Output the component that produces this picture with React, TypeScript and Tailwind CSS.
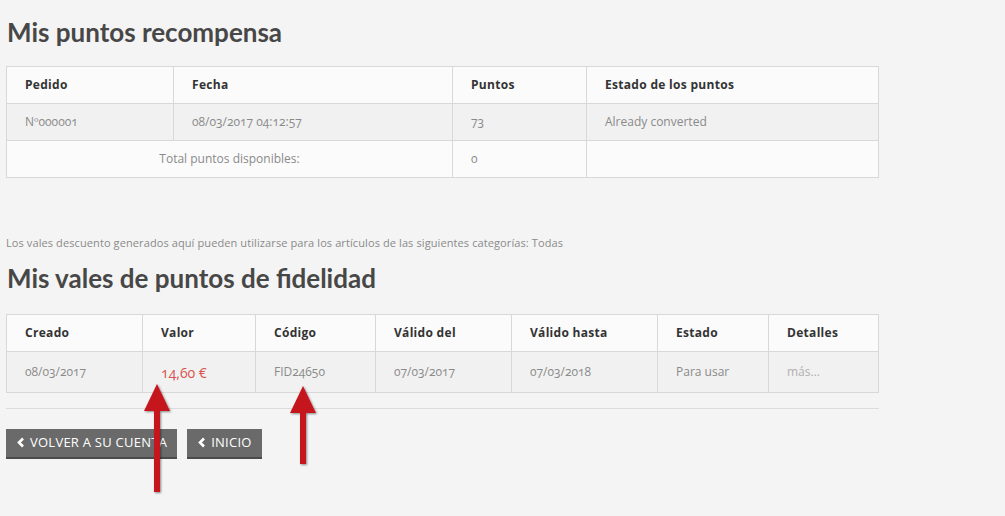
import React from 'react';

const body = {fontFamily: '"Open Sans", "Noto Sans", sans-serif'};

const Chevron = () => (
    <svg width="9" height="11" viewBox="0 0 9 11" className="mr-[5px]">
        <path d="M7 1.5 L3 5.5 L7 9.5" stroke="white" strokeWidth="2.6" fill="none"/>
    </svg>
);

const Arrow = ({x, top, length}: { x: number; top: number; length: number }) => (
    <svg
        className="absolute pointer-events-none"
        style={{left: x - 16, top: top - 2}}
        width="32"
        height={length + 6}
        viewBox={`0 0 32 ${length + 6}`}
    >
        <defs>
            <filter id={`s${x}`} x="-50%" y="-10%" width="200%" height="130%">
                <feDropShadow dx="1" dy="1" stdDeviation="1.2" floodColor="#000" floodOpacity="0.45"/>
            </filter>
        </defs>
        <g filter={`url(#s${x})`} fill="#c4161c">
            <polygon points={`16,2 29,29 3,29`}/>
            <rect x="13" y="27" width="6" height={length - 25}/>
        </g>
    </svg>
);

const th = 'text-left font-bold text-[12px] text-[#333] px-[18px] h-[37px] border border-[#d8d8d8] tracking-[0.3px]';
const td = 'text-[12px] text-[#8a8a8a] px-[18px] border border-[#d8d8d8]';

export default function App() {
    return (
        <div className="relative w-full min-h-[516px] bg-[#f4f4f4] px-[6px] pt-[14px]" style={body}>
            <h1 className="text-[26px] font-bold text-[#474747] leading-[36px] pl-[1px]"
                style={{fontFamily: 'Lato, sans-serif'}}>
                Mis puntos recompensa
            </h1>

            <table className="mt-[16px] w-[873px] border-collapse [font-variant-numeric:oldstyle-nums]">
                <colgroup>
                    <col className="w-[167px]"/>
                    <col className="w-[279px]"/>
                    <col className="w-[134px]"/>
                    <col/>
                </colgroup>
                <thead>
                <tr className="bg-[#fbfbfb]">
                    <th className={th}>Pedido</th>
                    <th className={th}>Fecha</th>
                    <th className={th}>Puntos</th>
                    <th className={th}>Estado de los puntos</th>
                </tr>
                </thead>
                <tbody>
                <tr className="bg-[#f1f1f1] h-[37px]">
                    <td className={td}>Nº000001</td>
                    <td className={td}>08/03/2017 04:12:57</td>
                    <td className={td}>73</td>
                    <td className={td}>Already converted</td>
                </tr>
                <tr className="bg-[#fbfbfb] h-[37px]">
                    <td colSpan={2} className={td + ' text-center'}>Total puntos disponibles:</td>
                    <td className={td}>0</td>
                    <td className={td}></td>
                </tr>
                </tbody>
            </table>

            <p className="mt-[57px] text-[11px] tracking-[0.1px] text-[#8a8a8a]">
                Los vales descuento generados aquí pueden utilizarse para los artículos de las siguientes categorías: Todas
            </p>

            <h2 className="mt-[8px] text-[26px] font-bold text-[#474747] leading-[36px] pl-[1px]"
                style={{fontFamily: 'Lato, sans-serif'}}>
                Mis vales de puntos de fidelidad
            </h2>

            <table className="mt-[18px] w-[873px] border-collapse [font-variant-numeric:oldstyle-nums]">
                <colgroup>
                    <col className="w-[136px]"/>
                    <col className="w-[113px]"/>
                    <col className="w-[120px]"/>
                    <col className="w-[136px]"/>
                    <col className="w-[146px]"/>
                    <col className="w-[111px]"/>
                    <col/>
                </colgroup>
                <thead>
                <tr className="bg-[#fbfbfb]">
                    <th className={th + ' h-[36px]'}>Creado</th>
                    <th className={th + ' h-[36px]'}>Valor</th>
                    <th className={th + ' h-[36px]'}>Código</th>
                    <th className={th + ' h-[36px]'}>Válido del</th>
                    <th className={th + ' h-[36px]'}>Válido hasta</th>
                    <th className={th + ' h-[36px]'}>Estado</th>
                    <th className={th + ' h-[36px]'}>Detalles</th>
                </tr>
                </thead>
                <tbody>
                <tr className="bg-[#f1f1f1] h-[41px]">
                    <td className={td}>08/03/2017</td>
                    <td className={td + ' text-[14px] text-[#d9534f] pt-[2px]'}>14,60 €</td>
                    <td className={td}>FID24650</td>
                    <td className={td}>07/03/2017</td>
                    <td className={td}>07/03/2018</td>
                    <td className={td}>Para usar</td>
                    <td className={td + ' text-[#b0b0b0]'}>más...</td>
                </tr>
                </tbody>
            </table>

            <div className="mt-[15px] w-[873px] border-t border-[#dcdcdc]"/>

            <div className="mt-[20px] flex gap-[10px]">
                <button
                    className="h-[30px] px-[10px] flex items-center bg-[#6a6a6a] border-b-2 border-[#4b4b4b] text-white text-[13px] tracking-[0.25px] uppercase">
                    <Chevron/>Volver a su cuenta
                </button>
                <button
                    className="h-[30px] px-[10px] flex items-center bg-[#6a6a6a] border-b-2 border-[#4b4b4b] text-white text-[13px] tracking-[0.25px] uppercase">
                    <Chevron/>Inicio
                </button>
            </div>

            <Arrow x={157} top={384} length={108}/>
            <Arrow x={303} top={386} length={78}/>
        </div>
    );
}
